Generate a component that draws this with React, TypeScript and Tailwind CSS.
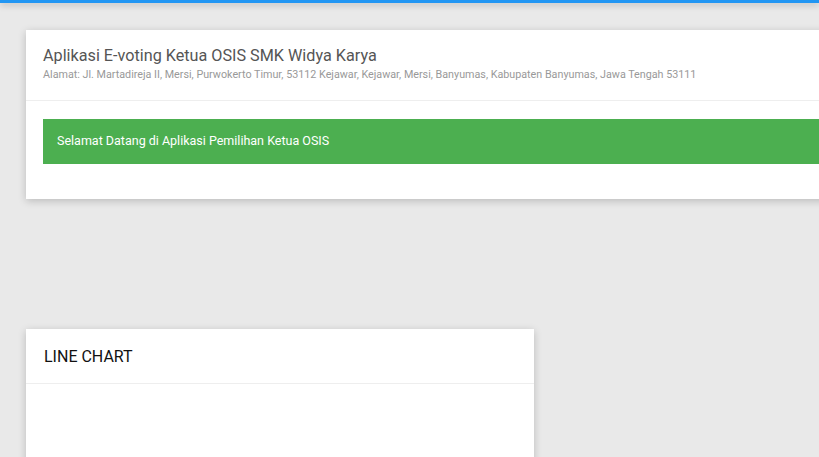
import React from 'react';

export default function App() {
  return (
    <div
      className="relative w-[819px] h-[457px] overflow-hidden bg-[#e9e9e9]"
      style={{ fontFamily: 'Roboto, "Liberation Sans", sans-serif' }}
    >
      {/* top nav edge */}
      <div className="h-[3px] bg-[#2196f3] shadow-[0_2px_6px_rgba(0,0,0,0.25)] relative z-10" />

      <div className="pl-[26px] pt-[27px]">
        {/* welcome card */}
        <div className="w-[830px] bg-white shadow-[0_2px_8px_rgba(0,0,0,0.2)]">
          <div className="px-[17px] pt-[16px] pb-[18px] border-b border-[#eeeeee]">
            <h2 className="text-[16.2px] leading-[20px] text-[#555555]">
              Aplikasi E-voting Ketua OSIS SMK Widya Karya
            </h2>
            <p className="mt-[2px] text-[10.75px] leading-[14px] text-[#999999]">
              Alamat: Jl. Martadireja II, Mersi, Purwokerto Timur, 53112 Kejawar, Kejawar, Mersi, Banyumas, Kabupaten Banyumas, Jawa Tengah 53111
            </p>
          </div>
          <div className="px-[17px] pt-[18px] pb-[35px]">
            <div className="h-[45px] bg-[#4caf50] flex items-center px-[14px] text-white text-[12.5px]">
              Selamat Datang di Aplikasi Pemilihan Ketua OSIS
            </div>
          </div>
        </div>

        {/* line chart card */}
        <div className="mt-[130px] w-[508px] h-[200px] bg-white shadow-[0_2px_8px_rgba(0,0,0,0.2)]">
          <div className="h-[55px] px-[18px] pt-[1px] flex items-center border-b border-[#eeeeee]">
            <h2 className="text-[16px] text-[#111111]">LINE CHART</h2>
          </div>
        </div>
      </div>
    </div>
  );
}
